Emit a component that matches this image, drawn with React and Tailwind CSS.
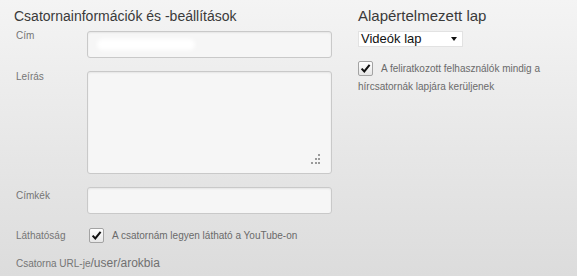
import React from "react";

function Check() {
  return (
    <span className="flex h-[15px] w-[15px] shrink-0 items-center justify-center rounded-[2px] border border-[#a3a3a3] bg-gradient-to-b from-white to-[#e6e6e6]">
      <svg width="11" height="11" viewBox="0 0 11 11">
        <path d="M1.6 5.6 L4.3 8.4 L9.6 1.8" stroke="#111" strokeWidth="2" fill="none" />
      </svg>
    </span>
  );
}

const field =
  "w-[245px] rounded-[3px] border border-[#c9c9c9] bg-[#f6f6f6] shadow-[inset_0_1px_2px_rgba(0,0,0,0.07)]";

export default function App() {
  return (
    <div
      className="flex h-[276px] w-[577px] bg-gradient-to-b from-[#f4f4f4] to-[#dcdcdc] text-[#757575]"
      style={{ fontFamily: '"Liberation Sans", Arial, sans-serif' }}
    >
      {/* left column: channel info */}
      <div className="w-[358px] shrink-0 pl-[14px] pt-[8px]">
        <h2 className="text-[14px] leading-[16px] text-[#3a3a3a]">
          Csatornainformációk és -beállítások
        </h2>

        <div className="mt-[7px] flex pl-[2px]">
          <div className="-mt-[1px] w-[71px] text-[10px] leading-[12px]">Cím</div>
          <div className={field + " flex h-[27px] items-center"}>
            <div className="ml-[9px] h-[11px] w-[98px] rounded-full bg-white blur-[2px]" />
          </div>
        </div>

        <div className="mt-[13px] flex pl-[2px]">
          <div className="w-[71px] text-[10px] leading-[12px]">Leírás</div>
          <div className={field + " relative h-[103px]"}>
            <svg className="absolute bottom-[9px] right-[11px]" width="10" height="10" viewBox="0 0 10 10">
              <rect x="8" y="0" width="2" height="2" fill="#9a9a9a" />
              <rect x="5" y="4" width="2" height="2" fill="#9a9a9a" />
              <rect x="8" y="4" width="2" height="2" fill="#9a9a9a" />
              <rect x="1" y="8" width="2" height="2" fill="#9a9a9a" />
              <rect x="5" y="8" width="2" height="2" fill="#9a9a9a" />
              <rect x="8" y="8" width="2" height="2" fill="#9a9a9a" />
            </svg>
          </div>
        </div>

        <div className="mt-[13px] flex pl-[2px]">
          <div className="mt-[3px] w-[71px] text-[10px] leading-[12px]">Címkék</div>
          <div className={field + " h-[27px]"} />
        </div>

        <div className="mt-[14px] flex items-center pl-[2px]">
          <div className="w-[71px] text-[10px] leading-[12px]">Láthatóság</div>
          <div className="flex items-center gap-[8px] pl-[2px] text-[10px] leading-[12px] text-[#6a6a6a]">
            <Check />
            <span>A csatornám legyen látható a YouTube-on</span>
          </div>
        </div>

        <p className="mt-[13px] pl-[2px] text-[10px] leading-[14px]">
          Csatorna URL-je<span className="text-[12px] text-[#707070]">/user/arokbia</span>
        </p>
      </div>

      {/* right column: default tab */}
      <div className="flex-1 pt-[7px]">
        <h2 className="text-[15px] leading-[17px] text-[#3a3a3a]">Alapértelmezett lap</h2>

        <div className="mt-[7px] flex h-[16px] w-[105px] items-center justify-between border border-[#e2e2e2] bg-white pl-[2px] pr-[5px] text-[13px] leading-[14px] text-[#111]">
          <span>Videók lap</span>
          <svg width="6" height="4" viewBox="0 0 6 4">
            <path d="M0 0 H6 L3 4 Z" fill="#111" />
          </svg>
        </div>

        <div className="mt-[14px] flex items-center gap-[8px] text-[10px] leading-[12px] text-[#6a6a6a]">
          <Check />
          <span>A feliratkozott felhasználók mindig a</span>
        </div>
        <p className="mt-[5px] text-[10px] leading-[12px] text-[#6a6a6a]">
          hírcsatornák lapjára kerüljenek
        </p>
      </div>
    </div>
  );
}
